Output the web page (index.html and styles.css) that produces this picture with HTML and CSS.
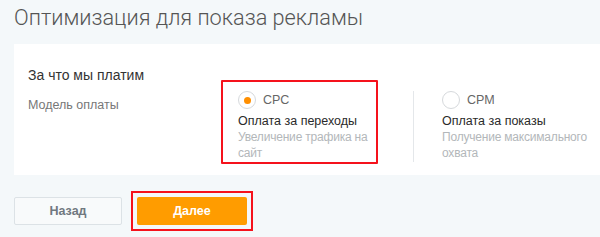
FILE: index.html
```html
<!DOCTYPE html>
<html lang="ru">
<head>
    <meta charset="UTF-8">
    <title>Оптимизация для показа рекламы</title>
    <link rel="stylesheet" href="styles.css">
</head>
<body>
    <div id="page">
        <h1>Оптимизация для показа рекламы</h1>
        <section class="panel">
            <h2>За что мы платим</h2>
            <div class="row">
                <div class="row-label">Модель оплаты</div>
                <label class="option option-selected">
                    <span class="radio-line">
                        <span class="radio checked"></span>
                        <span class="radio-name">CPC</span>
                    </span>
                    <span class="option-title">Оплата за переходы</span>
                    <span class="option-desc">Увеличение трафика на сайт</span>
                </label>
                <label class="option option-divided">
                    <span class="radio-line">
                        <span class="radio"></span>
                        <span class="radio-name">CPM</span>
                    </span>
                    <span class="option-title">Оплата за показы</span>
                    <span class="option-desc">Получение максимального охвата</span>
                </label>
            </div>
        </section>
        <div class="actions">
            <button class="btn btn-back">Назад</button>
            <span class="highlight">
                <button class="btn btn-next">Далее</button>
            </span>
        </div>
    </div>
</body>
</html>
```

FILE: styles.css
```css
body {
    margin: 0;
    background: #f4f8fa;
    font-family: "Liberation Sans", Arial, sans-serif;
    color: #333;
    overflow: hidden;
}
#page {
    padding-left: 14px;
}
h1 {
    margin: 0;
    padding-top: 3px;
    font-family: Roboto, sans-serif;
    font-weight: 300;
    font-size: 21.7px;
    line-height: 30px;
    color: #555;
    margin-bottom: 11px;
}
.panel {
    background: #ffffff;
    padding: 22px 14px 11px;
    overflow: hidden;
}
.panel h2 {
    margin: 0;
    font-size: 14px;
    font-weight: normal;
    line-height: 18px;
    color: #333;
}
.row {
    display: flex;
    align-items: flex-start;
    margin-top: -4px;
}
.row-label {
    flex-shrink: 0;
    width: 193px;
    padding-top: 17px;
    font-size: 12.5px;
    line-height: 16px;
    color: #777;
}
.option {
    flex-shrink: 0;
    display: flex;
    flex-direction: column;
    cursor: pointer;
    font-size: 12.5px;
}
.option-selected {
    width: 134px;
    border: 2px solid #f5121c;
    border-radius: 1px;
    padding: 9px 4px 0 15px;
}
.option-divided {
    width: 150px;
    margin-left: 35px;
    margin-top: 11px;
    border-left: 1px solid #e4e7ea;
    padding-left: 28px;
}
.radio-line {
    display: flex;
    align-items: center;
    height: 18px;
}
.radio {
    width: 16px;
    height: 16px;
    border: 1px solid #d6d9dc;
    border-radius: 50%;
    background: #fff;
    display: flex;
    align-items: center;
    justify-content: center;
}
.radio.checked::after {
    content: "";
    width: 7px;
    height: 7px;
    border-radius: 50%;
    background: #ff8f00;
}
.radio-name {
    margin-left: 7px;
    color: #666;
}
.option-title {
    margin-top: 4px;
    line-height: 16px;
    color: #2a2a2a;
}
.option-desc {
    font-size: 12px;
    letter-spacing: -0.2px;
    line-height: 16px;
    color: #b3b7ba;
    margin-bottom: 1px;
}
.actions {
    display: flex;
    align-items: center;
    gap: 9px;
    margin-top: 16px;
}
.btn {
    height: 28px;
    border-radius: 2px;
    font-family: inherit;
    font-size: 12.5px;
    font-weight: bold;
    cursor: pointer;
}
.btn-back {
    width: 108px;
    background: #f8fafb;
    border: 1px solid #dce2e6;
    color: #707880;
}
.highlight {
    display: flex;
    padding: 4px;
    border: 2px solid #f5121c;
}
.btn-next {
    width: 110px;
    background: #ff9c00;
    border: none;
    color: #fff;
}
```
